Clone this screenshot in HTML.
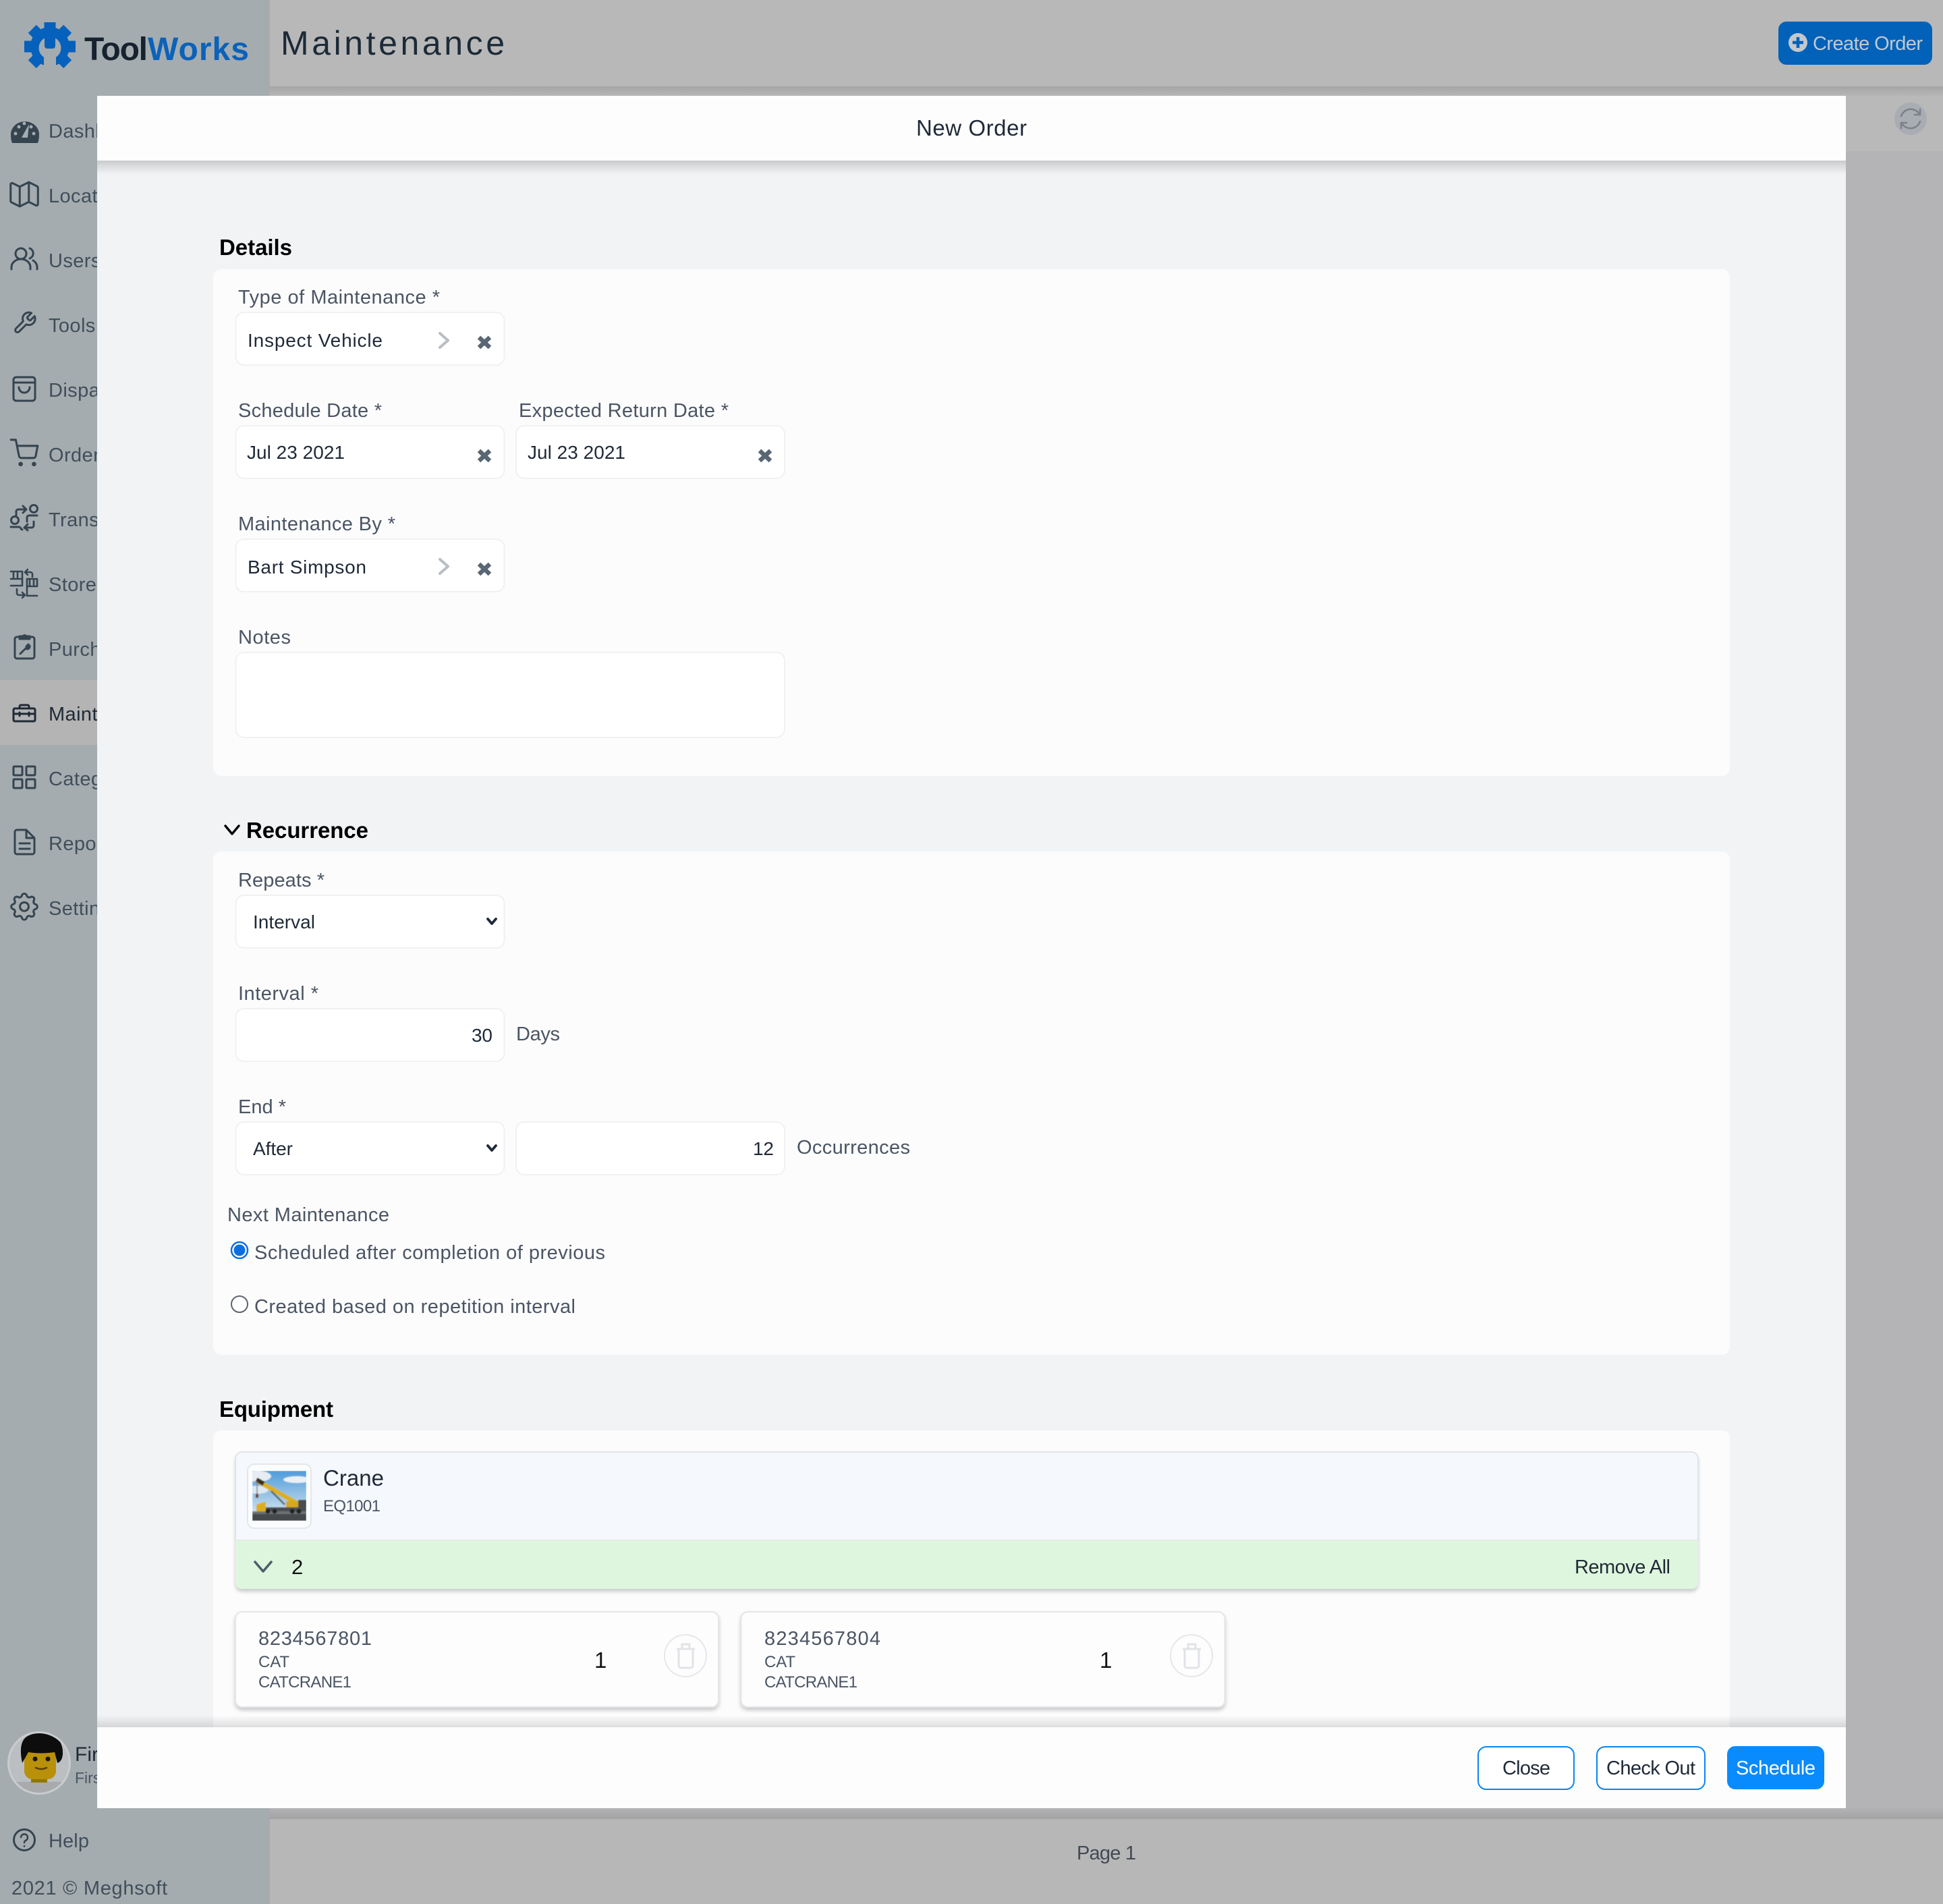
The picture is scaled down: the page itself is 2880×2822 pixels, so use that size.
<!DOCTYPE html>
<html lang="en"><head><meta charset="utf-8"><title>Maintenance - New Order</title>
<style>
html,body{margin:0;padding:0;background:#b4b4b6}
svg{display:block}
text{font-family:"Liberation Sans",Arial,sans-serif;white-space:pre}
.side{font-size:29px;fill:#414e5a;letter-spacing:.4px}
.lb{font-size:29px;fill:#4b5563}
.v{font-size:28px;fill:#1f2937}
.h{font-size:33px;font-weight:bold;fill:#000}
.s{font-size:24px;fill:#4b5563}
.f{fill:#fff;stroke:#f0f1f3;stroke-width:2}
.p{fill:#fcfcfd}
.i{fill:none;stroke:#35444f;stroke-width:3;stroke-linecap:round;stroke-linejoin:round}
.x{fill:none;stroke:#596674;stroke-width:6.5}
.ch{fill:none;stroke:#b9bec4;stroke-width:4;stroke-linecap:round;stroke-linejoin:round}
.sa{fill:none;stroke:#1f2937;stroke-width:3.8;stroke-linecap:round;stroke-linejoin:round}
.tr{fill:none;stroke:#e1e3e6;stroke-width:3}
</style></head><body>
<svg xmlns="http://www.w3.org/2000/svg" width="2880" height="2822" viewBox="0 0 2880 2822">
<defs>
<linearGradient id="topsh" x1="0" y1="0" x2="0" y2="1"><stop offset="0" stop-color="#a5a5a5"/><stop offset="1" stop-color="#b6b6b7"/></linearGradient>
<linearGradient id="botsh" x1="0" y1="0" x2="0" y2="1"><stop offset="0" stop-color="#b3b3b5"/><stop offset="1" stop-color="#a3a3a4"/></linearGradient>
<linearGradient id="headsh" x1="0" y1="0" x2="0" y2="1"><stop offset="0" stop-color="#000" stop-opacity=".17"/><stop offset="1" stop-color="#000" stop-opacity="0"/></linearGradient>
<linearGradient id="footsh" x1="0" y1="0" x2="0" y2="1"><stop offset="0" stop-color="#000" stop-opacity="0"/><stop offset="1" stop-color="#000" stop-opacity=".12"/></linearGradient>
<linearGradient id="sky" x1="0" y1="0" x2="0" y2="1"><stop offset="0" stop-color="#4f9cdb"/><stop offset=".6" stop-color="#a9cde8"/><stop offset="1" stop-color="#e6edf2"/></linearGradient>
<filter id="cs" x="-5%" y="-20%" width="110%" height="140%"><feDropShadow dx="0" dy="4" stdDeviation="3" flood-color="#000" flood-opacity=".2"/></filter>
<filter id="bl" x="-20%" y="-20%" width="140%" height="140%"><feGaussianBlur stdDeviation=".9"/></filter>
<clipPath id="av"><circle cx="58" cy="2613" r="44"/></clipPath>
<clipPath id="foot"><rect x="144" y="238" width="2592" height="2322"/></clipPath>
<clipPath id="cr"><rect x="0" y="0" width="80" height="74"/></clipPath>
</defs>

<!-- page background -->
<rect width="2880" height="2822" fill="#b4b4b6"/>
<rect x="400" y="128" width="2480" height="96" fill="#b9b9b9"/>
<rect x="400" y="128" width="2480" height="14" fill="url(#topsh)"/>
<rect x="400" y="0" width="2480" height="128" fill="#b8b8b8"/>
<!-- bottom bar -->
<rect x="400" y="2680" width="2480" height="16" fill="url(#botsh)"/>
<rect x="400" y="2696" width="2480" height="126" fill="#b7b7b7"/>
<text x="1596" y="2756" font-size="29" fill="#434a55" textLength="88">Page 1</text>

<!-- sidebar -->
<rect x="0" y="0" width="400" height="2822" fill="#a4acb0"/>
<rect x="0" y="1008" width="400" height="96" fill="#b4b4b4"/>

<!-- logo -->
<g transform="translate(74,69)" fill="#0561bb">
<rect x="-8.5" y="-36" width="17" height="20"/>
<rect x="-8.5" y="-37" width="17" height="20" transform="rotate(45)"/>
<rect x="-8.5" y="-38" width="17" height="20" transform="rotate(90)"/>
<rect x="-8.5" y="-37" width="17" height="20" transform="rotate(135)"/>
<rect x="-8.5" y="-37" width="17" height="20" transform="rotate(-45)"/>
<rect x="-8.5" y="-38" width="17" height="20" transform="rotate(-90)"/>
<rect x="-8.5" y="-37" width="17" height="20" transform="rotate(-135)"/>
<circle r="29"/>
<circle cy="2" r="16.5" fill="#a4acb0"/>
<rect x="-9" y="4" width="18" height="32" fill="#a4acb0"/>
<rect x="-8" y="-22" width="16" height="25" rx="4"/>
</g>
<text x="125" y="89" font-size="48" font-weight="bold" fill="#16232f" textLength="94">Tool</text>
<text x="219" y="89" font-size="48" font-weight="bold" fill="#0b62b8" textLength="150">Works</text>
<text x="416" y="81" font-size="50" fill="#1c2a38" textLength="332">Maintenance</text>

<!-- Create Order -->
<rect x="2636" y="32" width="228" height="64" rx="12" fill="#0261b8"/>
<circle cx="2665" cy="63" r="14" fill="#c2c8cc"/>
<path d="M2665 55v16M2657 63h16" stroke="#0261b8" stroke-width="4.5"/>
<text x="2687" y="74" font-size="29" fill="#bfc9d4" textLength="163">Create Order</text>

<!-- refresh -->
<circle cx="2832" cy="176" r="24" fill="#a9adb3"/>
<g fill="none" stroke="#7b818a" stroke-width="2.6" stroke-linecap="round" stroke-linejoin="round">
<path d="M2818 172a15 15 0 0 1 27 -3M2846 162v8h-8"/>
<path d="M2846 180a15 15 0 0 1 -27 3M2818 190v-8h8"/>
</g>

<!-- sidebar labels -->
<text class="side" x="72" y="204">Dashboard</text>
<text class="side" x="72" y="300">Locations</text>
<text class="side" x="72" y="396">Users</text>
<text class="side" x="72" y="492">Tools</text>
<text class="side" x="72" y="588">Dispatch</text>
<text class="side" x="72" y="684">Orders</text>
<text class="side" x="72" y="780">Transfers</text>
<text class="side" x="72" y="876">Stores</text>
<text class="side" x="72" y="972">Purchase</text>
<text class="side" x="72" y="1068" style="fill:#1f2a36">Maintenance</text>
<text class="side" x="72" y="1164">Categories</text>
<text class="side" x="72" y="1260">Reports</text>
<text class="side" x="72" y="1356">Settings</text>

<!-- dashboard icon -->
<path d="M18 212Q16 207 16 199A21 19 0 0 1 58 199Q58 207 56 212Z" fill="#35444f"/>
<g fill="#a4acb0"><circle cx="23" cy="198" r="2.5"/><circle cx="28" cy="188" r="2.5"/><circle cx="36" cy="183" r="2.5"/><circle cx="46" cy="188" r="2.5"/><circle cx="50" cy="198" r="2.5"/><path d="M43 184L41 204H32Z"/></g>
<!-- map -->
<g transform="translate(9,261) scale(2.25)"><path class="i" style="stroke-width:1.35" d="M9 20l-5.447-2.724A1 1 0 013 16.382V5.618a1 1 0 011.447-.894L9 7m0 13l6-3m-6 3V7m6 10l4.553 2.276A1 1 0 0021 18.382V7.618a1 1 0 00-.553-.894L15 4m0 13V4m0 0L9 7"/></g>
<!-- users -->
<g class="i"><circle cx="31" cy="376" r="8"/><path d="M17 399v-3a14 12 0 0 1 28 0v3"/><path d="M44 368a8 8 0 0 1 0 15"/><path d="M49 386a12 12 0 0 1 6 12v1"/></g>
<!-- wrench -->
<g transform="translate(18,460) scale(1.55)"><path class="i" style="stroke-width:1.9" d="M14.7 6.3a1 1 0 0 0 0 1.4l1.6 1.6a1 1 0 0 0 1.4 0l3.77-3.77a6 6 0 0 1-7.94 7.94l-6.91 6.91a2.12 2.12 0 0 1-3-3l6.91-6.91a6 6 0 0 1 7.94-7.94l-3.76 3.76z"/></g>
<!-- bag -->
<g class="i"><rect x="20" y="559" width="32" height="35" rx="4"/><path d="M20 567h32"/><path d="M28 574a8 8 0 0 0 16 0"/></g>
<!-- cart -->
<g transform="translate(14.4,650) scale(1.8)"><g class="i" style="stroke-width:1.7"><circle cx="9" cy="21" r="1"/><circle cx="20" cy="21" r="1"/><path d="M1 1h4l2.68 13.39a2 2 0 0 0 2 1.61h9.72a2 2 0 0 0 2-1.61L23 6H6"/></g></g>
<!-- transfers -->
<g class="i"><circle cx="50" cy="754" r="5.5"/><circle cx="22" cy="771" r="5.5"/><path d="M24 764v-6a3 3 0 0 1 3-3h11M34 750l5 5-5 5"/><path d="M40 773v-6a3 3 0 0 1 3-3h12"/><path d="M50 773v6a3 3 0 0 1-3 3H37M41 777l-5 5 5 4"/><path d="M16 781h12a3 3 0 0 1 3 3l2 1"/></g>
<!-- stores -->
<g class="i" style="stroke-width:2.6"><path d="M16 847h17M20 847v11M26 847v11M33 847v21H16M16 858h17"/><path d="M37 848h8a3 3 0 0 1 3 3v4M41 844l-4 4 4 4"/><path d="M40 858h15M44 858v11M50 858v11M55 858v11M40 869h15M40 858v25h15"/><path d="M25 873v6a3 3 0 0 0 3 3h9M33 878l4 4-4 4"/></g>
<!-- purchase -->
<g class="i"><rect x="22" y="944" width="29" height="32" rx="3"/><path d="M29 945v-2h5a3 3 0 0 1 5 0h5v4H29z" fill="#35444f"/><path d="M30 969l10-10M42 955l-3 3 2 2 3-3a4 4 0 0 1-4 5"/></g>
<!-- toolbox -->
<g class="i" style="stroke:#1f2a36"><rect x="20" y="1050" width="32" height="19" rx="2"/><path d="M29 1050v-3a2 2 0 0 1 2-2h10a2 2 0 0 1 2 2v3M20 1058h32M29 1056v5M43 1056v5"/></g>
<!-- categories -->
<g class="i"><rect x="20" y="1136" width="13" height="13" rx="1"/><rect x="39" y="1136" width="13" height="13" rx="1"/><rect x="20" y="1155" width="13" height="13" rx="1"/><rect x="39" y="1155" width="13" height="13" rx="1"/></g>
<!-- reports -->
<g class="i"><path d="M22 1233a3 3 0 0 1 3-3h14l12 12v21a3 3 0 0 1-3 3H25a3 3 0 0 1-3-3z"/><path d="M39 1231v11h11M29 1250h15M29 1258h15"/></g>
<!-- settings -->
<g transform="translate(10.2,1318) scale(2.15)"><g class="i" style="stroke-width:1.4"><path d="M10.325 4.317c.426-1.756 2.924-1.756 3.35 0a1.724 1.724 0 002.573 1.066c1.543-.94 3.31.826 2.37 2.37a1.724 1.724 0 001.065 2.572c1.756.426 1.756 2.924 0 3.35a1.724 1.724 0 00-1.066 2.573c.94 1.543-.826 3.31-2.37 2.37a1.724 1.724 0 00-2.572 1.065c-.426 1.756-2.924 1.756-3.35 0a1.724 1.724 0 00-2.573-1.066c-1.543.94-3.31-.826-2.37-2.37a1.724 1.724 0 00-1.065-2.572c-1.756-.426-1.756-2.924 0-3.35a1.724 1.724 0 001.066-2.573c-.94-1.543.826-3.31 2.37-2.37.996.608 2.296.07 2.572-1.065z"/><circle cx="12" cy="12" r="3"/></g></g>

<!-- avatar -->
<circle cx="58" cy="2613" r="47" fill="#c9ccce"/>
<g clip-path="url(#av)">
<rect x="10" y="2565" width="96" height="96" fill="#bcbfc2"/>
<rect x="20" y="2641" width="80" height="25" fill="#a8aaac"/>
<rect x="46" y="2633" width="24" height="9" fill="#8f7706"/>
<rect x="36" y="2592" width="47" height="45" rx="12" fill="#b8900a"/>
<path d="M33 2613Q27 2585 38 2575Q52 2565 75 2570Q94 2578 93 2600Q92 2611 85 2613L81 2597Q60 2600 42 2597Z" fill="#0d0d0e"/>
<circle cx="52" cy="2607" r="3.5" fill="#1a1510"/><circle cx="71" cy="2607" r="3.5" fill="#1a1510"/>
<path d="M53 2620q8 4 16 0" fill="none" stroke="#5a3d07" stroke-width="2.5" stroke-linecap="round"/>
</g>
<text x="111" y="2610" font-size="30" fill="#1f2a36">First Last</text>
<text x="111" y="2643" font-size="23" fill="#4b5663">First Last</text>

<!-- help -->
<circle cx="36" cy="2727" r="15.5" class="i"/>
<path class="i" style="stroke-width:2.6" d="M31 2723a5 5 0 1 1 7 5q-2 1-2 3M36 2736v.5"/>
<text x="72" y="2738" font-size="29" fill="#414e5a" textLength="60">Help</text>
<text x="17" y="2808" font-size="29" fill="#414e5a" textLength="231">2021 © Meghsoft</text>

<!-- MODAL -->
<rect x="144" y="142" width="2592" height="2538" fill="#f1f3f5"/>
<g clip-path="url(#foot)">

<!-- Details -->
<text class="h" x="325" y="378" textLength="108">Details</text>
<rect class="p" x="316" y="399" width="2248" height="751" rx="12"/>
<text class="lb" x="353" y="450" textLength="299">Type of Maintenance *</text>
<rect class="f" x="349.5" y="463" width="398" height="78" rx="12"/>
<text class="v" x="367" y="514" textLength="200">Inspect Vehicle</text>
<path class="ch" d="M652 494L664 504.5L652 515"/>
<path class="x" d="M710 500L726 515M726 500L710 515"/>

<text class="lb" x="353" y="618" textLength="213">Schedule Date *</text>
<rect class="f" x="349.5" y="631" width="398" height="78" rx="12"/>
<text class="v" x="366" y="680" textLength="145">Jul 23 2021</text>
<path class="x" d="M710 668L726 683M726 668L710 683"/>

<text class="lb" x="769" y="618" textLength="311">Expected Return Date *</text>
<rect class="f" x="765" y="631" width="398" height="78" rx="12"/>
<text class="v" x="782" y="680" textLength="145">Jul 23 2021</text>
<path class="x" d="M1126 668L1142 683M1142 668L1126 683"/>

<text class="lb" x="353" y="786" textLength="233">Maintenance By *</text>
<rect class="f" x="349.5" y="799" width="398" height="78" rx="12"/>
<text class="v" x="367" y="850" textLength="176">Bart Simpson</text>
<path class="ch" d="M652 829L664 839.5L652 850"/>
<path class="x" d="M710 836L726 851M726 836L710 851"/>

<text class="lb" x="353" y="954" textLength="78">Notes</text>
<rect class="f" x="349.5" y="967" width="813.5" height="126" rx="12"/>

<!-- Recurrence -->
<path fill="none" stroke="#000" stroke-width="3.4" stroke-linecap="round" stroke-linejoin="round" d="M334 1224L344 1236L354 1224"/>
<text class="h" x="365" y="1242" textLength="181">Recurrence</text>
<rect class="p" x="316" y="1262" width="2248" height="746" rx="12"/>
<text class="lb" x="353" y="1314" textLength="128">Repeats *</text>
<rect class="f" x="349.5" y="1327" width="398" height="78" rx="12"/>
<text class="v" x="375" y="1376" textLength="92">Interval</text>
<path class="sa" d="M723 1362L729 1369L735 1362"/>

<text class="lb" x="353" y="1482" textLength="119">Interval *</text>
<rect class="f" x="349.5" y="1495" width="398" height="78" rx="12"/>
<text class="v" x="699" y="1544" textLength="31">30</text>
<text class="lb" x="765" y="1542" textLength="65">Days</text>

<text class="lb" x="353" y="1650" textLength="71">End *</text>
<rect class="f" x="349.5" y="1663" width="398" height="78" rx="12"/>
<text class="v" x="375" y="1712" textLength="59">After</text>
<path class="sa" d="M723 1698L729 1705L735 1698"/>
<rect class="f" x="765" y="1663" width="398" height="78" rx="12"/>
<text class="v" x="1116" y="1712" textLength="31">12</text>
<text class="lb" x="1181" y="1710" textLength="168">Occurrences</text>

<text class="lb" x="337" y="1810" textLength="240">Next Maintenance</text>
<circle cx="355" cy="1853" r="12" fill="#fff" stroke="#0b6fe0" stroke-width="2.5"/>
<circle cx="355" cy="1853" r="8.5" fill="#0b6fe0"/>
<text class="lb" x="377" y="1866" textLength="520">Scheduled after completion of previous</text>
<circle cx="355" cy="1933" r="12" fill="#fff" stroke="#5b6470" stroke-width="2"/>
<text class="lb" x="377" y="1946" textLength="476">Created based on repetition interval</text>

<!-- Equipment -->
<text class="h" x="325" y="2100" textLength="169">Equipment</text>
<rect class="p" x="316" y="2120" width="2248" height="500" rx="12"/>

<g filter="url(#cs)">
<path d="M349 2162a10 10 0 0 1 10-10H2507a10 10 0 0 1 10 10V2345a10 10 0 0 1-10 10H359a10 10 0 0 1-10-10Z" fill="#f5f8fc"/>
</g>
<path d="M349 2162a10 10 0 0 1 10-10H2507a10 10 0 0 1 10 10V2283H349Z" fill="#f5f8fc" stroke="#e0e4e8" stroke-width="2"/>
<path d="M349 2283H2517V2345a10 10 0 0 1-10 10H359a10 10 0 0 1-10-10Z" fill="#dff6de"/>
<rect x="367" y="2170" width="94" height="95" rx="10" fill="#fbfcfd" stroke="#e4e7ea" stroke-width="2"/>
<!-- crane picture -->
<g transform="translate(374,2180)"><g clip-path="url(#cr)"><g filter="url(#bl)">
<rect width="80" height="74" fill="url(#sky)"/>
<ellipse cx="66" cy="13" rx="20" ry="5" fill="#e9f1f6"/>
<ellipse cx="8" cy="8" rx="20" ry="8" fill="#e6eef4"/>
<ellipse cx="8" cy="28" rx="16" ry="6" fill="#dde8f1"/>
<path d="M8 15L68 49" stroke="#dcb01c" stroke-width="6.5"/>
<path d="M6 13L17 19" stroke="#37311c" stroke-width="6.5"/>
<path d="M28 30L48 50" stroke="#5a5e60" stroke-width="2.5"/>
<path d="M7 15V38" stroke="#8a7c74" stroke-width="1.5"/>
<rect x="5" y="34" width="4" height="6" fill="#6a4030"/>
<rect x="50" y="45" width="30" height="10" fill="#d6a81d"/>
<rect x="68" y="43" width="12" height="12" fill="#4c4c4c"/>
<path d="M6 60V50L18 46H20V60Z" fill="#dcae1e"/>
<rect x="20" y="54" width="60" height="7" fill="#4a4e52"/>
<rect y="60" width="80" height="4" fill="#6d7175"/>
<rect y="64" width="80" height="10" fill="#44484c"/>
<circle cx="23" cy="60" r="3.5" fill="#222"/><circle cx="33" cy="60" r="3.5" fill="#222"/>
<circle cx="59" cy="60" r="3.5" fill="#222"/><circle cx="69" cy="60" r="3.5" fill="#222"/>
</g></g></g>
<text x="479" y="2202" font-size="33" fill="#1f2937" textLength="90">Crane</text>
<text class="s" x="479" y="2240" textLength="85">EQ1001</text>
<path fill="none" stroke="#4d5e6a" stroke-width="3.6" stroke-linecap="round" stroke-linejoin="round" d="M378 2315L390 2329L402 2315"/>
<text x="432" y="2333" font-size="31" fill="#111" textLength="17">2</text>
<text x="2334" y="2332" font-size="29" fill="#1f2a36" textLength="142">Remove All</text>

<!-- item cards -->
<g filter="url(#cs)"><rect x="349" y="2389" width="716" height="141" rx="10" fill="#fdfdfe" stroke="#e4e6e9" stroke-width="2"/></g>
<text class="lb" x="383" y="2438" textLength="168">8234567801</text>
<text class="s" x="383" y="2471" textLength="46">CAT</text>
<text class="s" x="383" y="2501" textLength="138">CATCRANE1</text>
<text x="881" y="2472" font-size="33" fill="#111">1</text>
<circle cx="1016" cy="2454" r="31" fill="#fdfdfe" stroke="#e5e7ea" stroke-width="2"/>
<g class="tr"><path d="M1003 2444H1030M1006 2444V2469a3 3 0 0 0 3 3H1024a3 3 0 0 0 3-3V2444M1011 2444V2437H1022V2444"/></g>

<g filter="url(#cs)"><rect x="1098.5" y="2389" width="717" height="141" rx="10" fill="#fdfdfe" stroke="#e4e6e9" stroke-width="2"/></g>
<text class="lb" x="1133" y="2438" textLength="172">8234567804</text>
<text class="s" x="1133" y="2471" textLength="46">CAT</text>
<text class="s" x="1133" y="2501" textLength="138">CATCRANE1</text>
<text x="1630" y="2472" font-size="33" fill="#111">1</text>
<circle cx="1766" cy="2454" r="31" fill="#fdfdfe" stroke="#e5e7ea" stroke-width="2"/>
<g class="tr"><path d="M1753 2444H1780M1756 2444V2469a3 3 0 0 0 3 3H1774a3 3 0 0 0 3-3V2444M1761 2444V2437H1772V2444"/></g>

<rect x="144" y="2542" width="2592" height="18" fill="url(#footsh)"/>
</g>

<!-- modal header -->
<rect x="144" y="238" width="2592" height="20" fill="url(#headsh)"/>
<rect x="144" y="142" width="2592" height="96" fill="#fdfdfe"/>
<text x="1358" y="201" font-size="33" fill="#1f2937" textLength="164">New Order</text>

<!-- modal footer -->
<rect x="144" y="2560" width="2592" height="120" fill="#fdfdfe"/>
<rect x="2191" y="2589" width="142" height="63" rx="12" fill="#fff" stroke="#0a85f0" stroke-width="2"/>
<text x="2227" y="2630" font-size="29" fill="#1f2937" textLength="71">Close</text>
<rect x="2367" y="2589" width="160" height="63" rx="12" fill="#fff" stroke="#0a85f0" stroke-width="2"/>
<text x="2381" y="2630" font-size="29" fill="#1f2937" textLength="132">Check Out</text>
<rect x="2560" y="2588" width="144" height="64" rx="12" fill="#0a8bfd"/>
<text x="2573" y="2630" font-size="29" fill="#fff" textLength="118">Schedule</text>
</svg>
</body></html>
